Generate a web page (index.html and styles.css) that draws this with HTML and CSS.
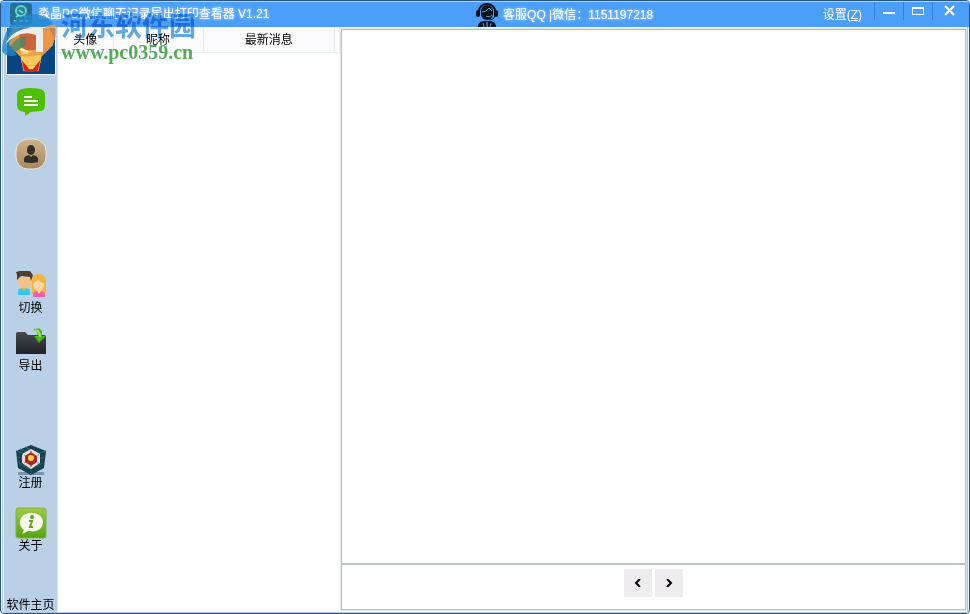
FILE: index.html
```html
<!DOCTYPE html>
<html lang="zh-CN">
<head>
<meta charset="utf-8">
<title>淼晶PC微信聊天记录导出打印查看器</title>
<link rel="stylesheet" href="styles.css">
</head>
<body>
<div class="window">
  <header class="titlebar">
    <svg class="app-icon" viewBox="0 0 24 24" aria-hidden="true">
      <rect x="1" y="1" width="22" height="22" rx="3" fill="#24718f"/>
      <circle cx="12" cy="9" r="5" fill="#277f9c" stroke="#66d4cd" stroke-width="2"/>
      <path d="M10 8l4 3M7 15l3-2m7 2l-3-2" stroke="#70e0ca" stroke-width="2"/>
      <path d="M5 19h3m2 0h4m2 0h3" stroke="#c9e2e3" stroke-width="2"/>
    </svg>
    <h1 class="title">淼晶PC微信聊天记录导出打印查看器 V1.21</h1>
    <div class="support">
      <svg class="agent" viewBox="0 0 24 25" aria-hidden="true">
        <path d="M4 11V9a8 7 0 0 1 16 0v3" fill="none" stroke="#06131f" stroke-width="2"/>
        <path d="M6 9a6 6 0 0 1 12 0v3a6 6 0 0 1-12 0z" fill="#06131f"/>
        <rect x="1" y="8" width="4" height="7" rx="2" fill="#06131f"/>
        <rect x="19" y="8" width="4" height="7" rx="2" fill="#06131f"/>
        <path d="M7 10l4-1 3-3 3 3M11 14c3 1 4 1 6-1" fill="none" stroke="#5b9bd1" stroke-width="1"/>
        <path d="M20 14q-1 4-6 4" fill="none" stroke="#06131f" stroke-width="1"/>
        <path d="M3 25c0-4 3-6 6-6h6c3 0 6 2 6 6z" fill="#06131f"/>
        <path d="M8 21l1 4m7-4l-1 4" stroke="#4da0f5"/><path d="M12 20v5" stroke="#8abfed"/>
      </svg>
      <span>客服QQ |微信：1151197218</span>
    </div>
    <div class="window-actions">
      <button class="settings" type="button">设置(<u>Z</u>)</button>
      <button class="win-button" type="button" aria-label="最小化"><svg viewBox="0 0 14 14"><path d="M1 9h12" stroke="#fff" stroke-width="2"/></svg></button>
      <button class="win-button" type="button" aria-label="最大化"><svg viewBox="0 0 14 14"><path d="M1 3h12v2H1z" fill="#fff"/><path d="M1.500 3.500h11v7h-11z" fill="none" stroke="#fff"/></svg></button>
      <button class="win-button close" type="button" aria-label="关闭"><svg viewBox="0 0 14 14"><path d="M2 2l9 9m0-9l-9 9" stroke="#fff" stroke-width="2"/></svg></button>
    </div>
  </header>
  <main class="workspace">
    <nav class="sidebar" aria-label="主导航">
      <svg class="portrait" viewBox="0 0 50 48" aria-hidden="true">
        <path d="M0 0h50v48H0z" fill="#064583"/>
        <path d="M6 0h38l5 10-1 8-12 12-3 15H17l-3-15L2 18 1 10z" fill="#e8963c"/>
        <path d="M12 0h26l-2 19-6 4H20l-6-4z" fill="#c9643b"/>
        <path d="M14 20l8 4h6l8-4-1 16-5 8H20l-5-8z" fill="#f8c95a"/>
        <path d="M14 22l8 3m6 0l8-3" stroke="#fffbd5" stroke-width="2"/>
        <path d="M15 33l5 6h10l5-6-3 11-4 2h-6l-4-2z" fill="#dc201d"/>
        <path d="M20 39h10l-3 4h-4z" fill="#ffdc54"/>
      </svg>
      <button class="nav-button chat" type="button" aria-label="聊天">
        <svg viewBox="0 0 32 32"><path d="M7 2Q16 0 25 2q5 1 5 6v10q0 6-5 6l-9 1-6 4v-4q-8 0-8-7V8q0-5 5-6z" fill="#4fc000"/><path d="M9 10h8M9 14h14M9 18h14" stroke="#fff" stroke-width="2"/></svg>
      </button>
      <button class="nav-button contact" type="button" aria-label="联系人">
        <svg viewBox="0 0 32 32"><defs><linearGradient id="tan" x2="0" y2="1"><stop stop-color="#cfb38e"/><stop offset="1" stop-color="#a88860"/></linearGradient></defs><rect x="1" y="1" width="30" height="30" rx="12" fill="url(#tan)" stroke="#eee5d7"/><ellipse cx="16" cy="12" rx="4" ry="5" fill="#342e27"/><path d="M9 24v-3q0-3 5-4l2 2 2-2q5 1 5 4v3q-7 2-14 0" fill="#342e27"/></svg>
      </button>
      <button class="nav-button switch" type="button">
        <svg viewBox="0 0 32 32"><path d="M3 26v-3q0-4 6-4t6 4v3z" fill="#35c8ec"/><path d="M7 17h4v3l-2 2-2-2z" fill="#e9ad70"/><path d="M3 9h13v5q-1 5-6 5t-7-5z" fill="#f4c281"/><path d="M2 11V6l-1-3 4-1h10l3 4-2 6-1-4-9-1z" fill="#513c2e"/><path d="M17 25V12q1-7 7-7t7 7v12z" fill="#f7b33a"/><path d="M18 15l5-5q2 4 6 4v3q-1 5-5 5t-6-5z" fill="#ffd6a5"/><path d="M18 28v-3q1-3 6-3t6 3v3z" fill="#f45dac"/><path d="M22 22h4l-2 3z" fill="#ffd6a5"/></svg>
        <span>切换</span>
      </button>
      <button class="nav-button export" type="button">
        <svg viewBox="0 0 32 32"><defs><linearGradient id="folder" x2="0" y2="1"><stop stop-color="#47474a"/><stop offset="1" stop-color="#222327"/></linearGradient></defs><path d="M1 7q0-2 2-2h7l3 3h16q2 0 2 2v17H1z" fill="url(#folder)"/><path d="M18 3q6-4 9 1v5h4l-7 7-5-7h4q0-5-5-6z" fill="#45b51c"/><path d="M20 3q5 0 5 7" fill="none" stroke="#a5e454" stroke-width="2"/></svg>
        <span>导出</span>
      </button>
      <button class="nav-button register" type="button">
        <svg viewBox="0 0 32 32"><path d="M3 28h26v3H3z" fill="#7893ac"/><path d="M16 1l15 6-2 17-13 7-13-7L1 7z" fill="#164250"/><path d="M1 7l15 5 15-5M16 12v19M5 5l12 5M10 3l14 6M3 13l13 5 13-5M4 19l12 6 12-6" fill="none" stroke="#356578"/><path d="M16 5l9 5v9l-9 6-9-6v-9z" fill="#e8dfe1"/><path d="M16 8l6 4v6l-6 4-6-4v-6z" fill="#ac2926"/><path d="M7 10l18 10M7 20l18-10M16 4v22" stroke="#3f3034" stroke-dasharray="1 2"/><circle cx="16" cy="14" r="3" fill="#ffcf42"/></svg>
        <span>注册</span>
      </button>
      <button class="nav-button about" type="button">
        <svg viewBox="0 0 32 32"><defs><linearGradient id="green" x2="0" y2="1"><stop stop-color="#9dcc45"/><stop offset="1" stop-color="#55a411"/></linearGradient></defs><rect x="1" y="1" width="30" height="30" rx="2" fill="url(#green)" stroke="#83b345"/><path d="M9 23C2 18 4 6 16 6c14-1 16 15 5 18-4 1-6 0-8 0l-6 3z" fill="#f8faed"/><circle cx="17" cy="10" r="2" fill="#64a421"/><path d="M14 14h3l-2 6h3" fill="none" stroke="#64a421" stroke-width="2"/></svg>
        <span>关于</span>
      </button>
      <a class="home" href="#">软件主页</a>
    </nav>
    <section class="conversations" aria-label="会话列表">
      <table>
        <colgroup><col class="avatar-column"><col class="name-column"><col><col class="end-column"></colgroup>
        <thead><tr><th>头像</th><th>昵称</th><th>最新消息</th><td></td></tr></thead>
      </table>
    </section>
    <section class="viewer" aria-label="聊天记录">
      <div class="messages"></div>
      <footer class="pager">
        <button type="button" aria-label="上一页"><svg viewBox="0 0 8 8"><path d="M6 0L2 4l4 4" fill="none" stroke="#000" stroke-width="2"/></svg></button>
        <button type="button" aria-label="下一页"><svg viewBox="0 0 8 8"><path d="M2 0l4 4-4 4" fill="none" stroke="#000" stroke-width="2"/></svg></button>
      </footer>
    </section>
  </main>
  <svg class="watermark-logo" viewBox="0 0 56 56" aria-hidden="true">
    <path d="M1 43C2 21 14 6 32 6q14 0 20 10l-10 3Q20 16 8 36L16 47Q5 50 1 43z" fill="#2187cc" opacity=".8"/>
    <path d="M54 16C60 36 42 54 17 47C33 47 43 36 43 20z" fill="#ed9748" opacity=".8"/>
    <path d="M4 37Q12 20 32 20h10v24h-7V27Q18 21 4 37z" fill="#edf4f6" opacity=".95"/>
    <path d="M9 38q7-10 16-9v8l-11 7q-4-2-5-6" fill="#3f8870" opacity=".75"/>
  </svg>
  <div class="watermark"><strong>河东软件园</strong><span>www.pc0359.cn</span></div>
</div>
</body>
</html>
```
FILE: styles.css
```css
* { box-sizing: border-box; }
body {
  margin: 0;
  font: 12px/16px "Liberation Sans", "Noto Sans CJK SC", sans-serif;
  color: #000;
}
button { margin: 0; padding: 0; border: 0; background: none; color: inherit; font: inherit; }
svg { display: block; }
.window {
  position: relative;
  display: flex;
  flex-direction: column;
  min-height: 100vh;
  border: 1px solid #285685;
  border-radius: 4px;
  overflow: hidden;
  background: #e5f3fc;
}
.titlebar {
  display: grid;
  grid-template-columns: 32px 7fr auto 5fr;
  height: 26px;
  border-top: 1px solid #a1d5ff;
  background: #4b9ff9;
  color: #fff;
}
.app-icon { width: 24px; height: 24px; margin-left: 8px; }
.title {
  margin: 0;
  padding: 3px 5px;
  font-size: 12px;
  line-height: 18px;
  font-weight: 400;
  white-space: nowrap;
  text-shadow: 0 0 3px #d8efff;
}
.support { display: flex; align-items: center; gap: 4px; white-space: nowrap; text-shadow: 0 0 3px #d8efff; }
.agent { width: 24px; height: 25px; }
.window-actions { display: flex; justify-content: flex-end; padding-right: 3px; }
.settings { padding: 0 12px; }
.settings u { text-underline-offset: 1px; }
.win-button { display: flex; justify-content: center; width: 29px; height: 18px; padding-top: 2px; border-left: 1px solid #3681ce; }
.win-button svg { width: 14px; height: 14px; }
.close { width: 34px; }
.workspace {
  flex: 1;
  display: grid;
  grid-template-columns: 54px 283px 1fr;
  margin: 0 1px;
  border: 1px solid #b5c9d8;
  border-top: 0;
  background: #fff;
}
.sidebar {
  display: flex;
  flex-direction: column;
  align-items: center;
  border-left: 1px solid #edf5fc;
  background: #bad0e7;
}
.portrait { width: 50px; height: 48px; border: 1px solid #f1f6f9; }
.nav-button { display: flex; flex-direction: column; align-items: center; }
.nav-button svg { width: 32px; height: 32px; }
.nav-button span { line-height: 14px; }
.chat { margin-top: 12px; }
.contact { margin-top: 19px; }
.switch { margin-top: 99px; }
.export { margin-top: 12px; }
.register { margin-top: 71px; }
.about { margin-top: 17px; }
.home { margin-top: auto; color: #000; text-decoration: none; white-space: nowrap; line-height: 14px; }
.conversations { border-left: 1px solid #d7e4ed; }
table { width: 100%; border-collapse: collapse; table-layout: fixed; }
.avatar-column { width: 55px; }
.name-column { width: 90px; }
.end-column { width: 5px; }
th, td { height: 25px; padding: 1px 0 0; border-right: 1px solid #e5edf5; border-bottom: 1px solid #e5edf5; font-weight: 400; background: #fcfcfe; }
.viewer { display: flex; flex-direction: column; margin: 2px 1px; border: 1px solid #adc1cf; outline: 1px solid #dce8f0; background: #fff; }
.messages { flex: 1; }
.pager { display: flex; justify-content: center; gap: 3px; padding: 4px 0 12px; border-top: 2px solid #bbc4cd; }
.pager button { display: grid; place-items: center; width: 28px; height: 28px; background: #eeecef; }
.pager svg { width: 8px; height: 8px; }
.watermark-logo { position: absolute; top: 7px; left: 0; width: 56px; height: 56px; pointer-events: none; }
.watermark {
  position: absolute;
  top: 7px;
  left: 60px;
  mix-blend-mode: multiply;
  pointer-events: none;
}
.watermark strong {
  display: block;
  color: #5faae2;
  font: 700 27px/34px "Noto Sans CJK SC", sans-serif;
}
.watermark span { display: block; color: #58ad58; font: 700 20px/20px "Liberation Serif", serif; }
```
